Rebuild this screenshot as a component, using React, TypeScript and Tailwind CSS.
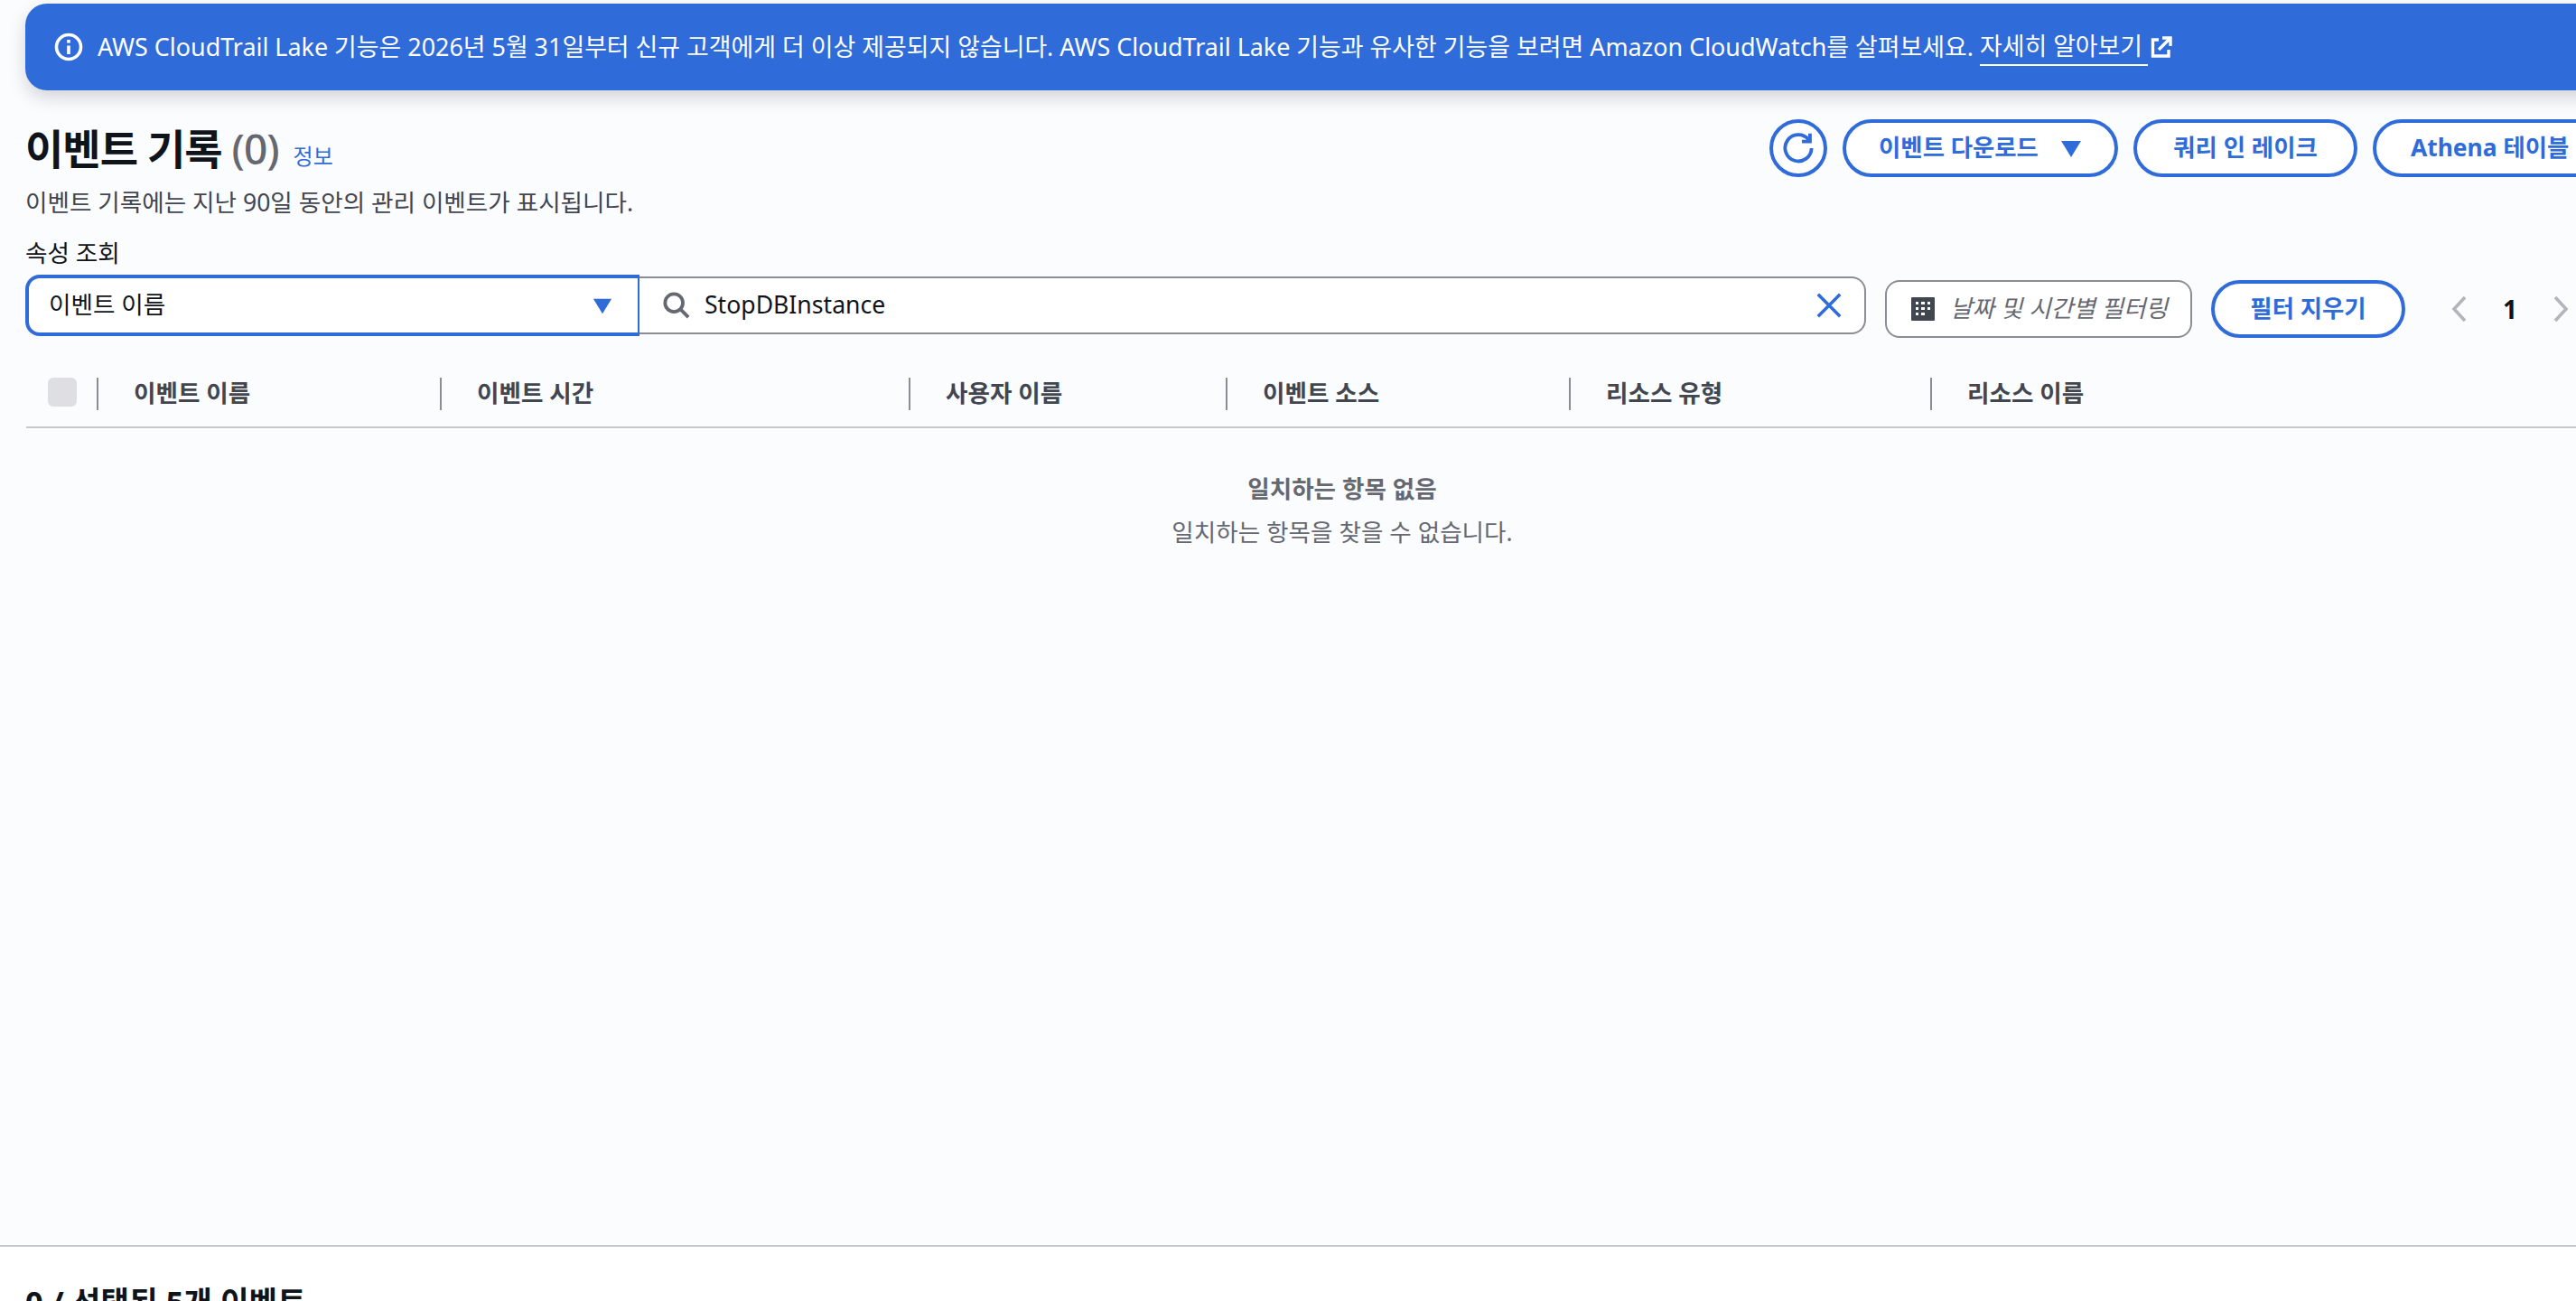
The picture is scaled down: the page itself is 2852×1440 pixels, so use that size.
import React from "react"

const font = { fontFamily: '"Noto Sans", "Noto Sans CJK KR", sans-serif' }

const columns = [
    { label: "이벤트 이름", width: "w-[380px]" },
    { label: "이벤트 시간", width: "w-[519px]" },
    { label: "사용자 이름", width: "w-[351px]" },
    { label: "이벤트 소스", width: "w-[380px]" },
    { label: "리소스 유형", width: "w-[400px]" },
    { label: "리소스 이름", width: "w-[400px]" },
]

const Caret = ({ className }: { className: string }) => (
    <svg viewBox="0 0 24 24" className={className} fill="currentColor">
        <path d="M1 4h22L12 22z" />
    </svg>
)

const PillButton = ({ children, width }: { children: React.ReactNode; width: string }) => (
    <button className={`${width} h-[64px] shrink-0 rounded-full border-[4px] border-[#2f6bd9] bg-white text-[#2f6bd9] text-[26.4px] font-bold flex items-center gap-[24px] whitespace-nowrap`}>
        {children}
    </button>
)

export default function App() {
    return (
        <div style={font} className="w-[2852px] h-[1440px] overflow-hidden bg-white flex flex-col">
            <div className="w-[2990px] h-[1378px] shrink-0 bg-[#fbfcfe] pl-[28px] pt-[4px]">
                {/* banner */}
                <div className="h-[96px] rounded-l-[24px] bg-[#2f6bd9] text-white text-[26.9px] flex items-center pl-[32px] shadow-[0_8px_20px_rgba(0,0,20,0.16)] whitespace-nowrap">
                    <svg viewBox="0 0 32 32" className="w-[32px] h-[32px] shrink-0 mr-[16px]" fill="none" stroke="currentColor" strokeWidth="3.6">
                        <circle cx="16" cy="16" r="13.5" />
                        <path d="M16 14.5v9.5" />
                        <path d="M16 8v3.6" />
                    </svg>
                    <span>AWS CloudTrail Lake 기능은 2026년 5월 31일부터 신규 고객에게 더 이상 제공되지 않습니다. AWS CloudTrail Lake 기능과 유사한 기능을 보려면 Amazon CloudWatch를 살펴보세요.</span>
                    <span className="ml-[7px] pr-[6px] border-b-2 border-white">자세히 알아보기</span>
                    <svg viewBox="0 0 24 24" className="w-[24px] h-[24px] ml-[3px] shrink-0" fill="none" stroke="currentColor" strokeWidth="3.4">
                        <path d="M9 4H2.5v18H20v-7" />
                        <path d="M9 15L22 2" />
                        <path d="M13 2h9v9" />
                    </svg>
                </div>

                {/* title row */}
                <div className="flex mt-[32px]">
                    <div className="w-[1931px] shrink-0">
                        <div className="flex items-baseline h-[60px]">
                            <h1 className="text-[46px] leading-[64px] font-bold text-[#0f141a] tracking-[-1px]">
                                이벤트 기록 <span className="font-medium text-[#656871]">(0)</span>
                            </h1>
                            <span className="ml-[16px] text-[24px] text-[#2f6bd9]">정보</span>
                        </div>
                        <p className="mt-[12px] text-[26.6px] leading-[40px] text-[#424650]">
                            이벤트 기록에는 지난 90일 동안의 관리 이벤트가 표시됩니다.
                        </p>
                    </div>
                    <div className="flex gap-[17px]">
                        <button className="w-[64px] h-[64px] shrink-0 rounded-full border-[4px] border-[#2f6bd9] bg-white text-[#2f6bd9] flex items-center justify-center">
                            <svg viewBox="0 0 32 32" className="w-[36px] h-[36px]" fill="none" stroke="currentColor" strokeWidth="3.4">
                                <path d="M26 7.5A13 13 0 1 0 29 16" />
                                <path d="M27.5 1.5v8h-8" />
                            </svg>
                        </button>
                        <PillButton width="w-[305px] justify-center">
                            이벤트 다운로드
                            <Caret className="w-[24px] h-[24px]" />
                        </PillButton>
                        <PillButton width="w-[248px] justify-center">쿼리 인 레이크</PillButton>
                        <PillButton width="w-[356px] justify-start pl-[38px]">Athena 테이블 생성</PillButton>
                    </div>
                </div>

                {/* filters */}
                <div className="mt-[16px] text-[26.6px] leading-[40px] text-[#0f141a]">속성 조회</div>
                <div className="flex items-start mt-[4px]">
                    <div className="w-[680px] h-[68px] shrink-0 rounded-l-[16px] border-[4px] border-r-2 border-[#2f6bd9] bg-white text-[#0f141a] text-[26.6px] flex items-center justify-between pl-[22px] pr-[28px]">
                        이벤트 이름
                        <Caret className="w-[22px] h-[22px] text-[#2f6bd9]" />
                    </div>
                    <div className="w-[1358px] h-[64px] mt-[2px] shrink-0 rounded-r-[16px] border-2 border-l-0 border-[#8c8c94] bg-white flex items-center pl-[26px] pr-[24px] text-[26.6px] text-[#0f141a]">
                        <svg viewBox="0 0 32 32" className="w-[30px] h-[30px] text-[#656871] mr-[16px]" fill="none" stroke="currentColor" strokeWidth="4">
                            <circle cx="13" cy="13" r="10.5" />
                            <path d="M21 21l9 9" />
                        </svg>
                        StopDBInstance
                        <svg viewBox="0 0 32 32" className="w-[30px] h-[30px] ml-auto text-[#2f6bd9]" fill="none" stroke="currentColor" strokeWidth="3.8">
                            <path d="M3 3l26 26M29 3L3 29" />
                        </svg>
                    </div>
                    <div className="w-[340px] h-[64px] mt-[6px] ml-[21px] shrink-0 rounded-[16px] border-2 border-[#8c8c94] bg-white flex items-center pl-[26px] text-[26.6px] italic text-[#656871] whitespace-nowrap">
                        <svg viewBox="0 0 28 28" className="w-[28px] h-[28px] mr-[16px] shrink-0 text-[#424650]">
                            <rect x="1" y="1" width="26" height="26" rx="1" fill="currentColor" />
                            <path d="M6 6h3v3H6zM12 6h4v3h-4zM19 6h3v3h-3zM6 12h3v3H6zM12 12h4v3h-4zM19 12h3v3h-3zM6 18h3v3H6zM12 18h4v3h-4z" fill="#fff" />
                        </svg>
                        날짜 및 시간별 필터링
                    </div>
                    <div className="mt-[6px] ml-[21px]">
                        <PillButton width="w-[215px] justify-center">필터 지우기</PillButton>
                    </div>
                    <div className="flex items-center h-[64px] mt-[6px] ml-[49px] text-[#b4b4bb]">
                        <svg viewBox="0 0 20 32" className="w-[22px] h-[32px]" fill="none" stroke="currentColor" strokeWidth="3.6">
                            <path d="M16 3L4 16l12 13" />
                        </svg>
                        <span className="w-[90px] text-center text-[28px] font-bold text-[#0f141a]">1</span>
                        <svg viewBox="0 0 20 32" className="w-[22px] h-[32px]" fill="none" stroke="currentColor" strokeWidth="3.6">
                            <path d="M4 3l12 13L4 29" />
                        </svg>
                    </div>
                </div>

                {/* table header */}
                <div className="w-[2914px] ml-[1px] mt-[44px]">
                    <div className="flex items-center h-[54px] border-b-2 border-[#c6c6cd] box-content">
                        <div className="w-[78px] h-[54px] shrink-0 pl-[24px] flex items-start">
                            <div className="w-[32px] h-[32px] rounded-[6px] bg-[#dedee3]" />
                        </div>
                        {columns.map((col) => (
                            <div key={col.label} className={`${col.width} h-[36px] mb-[18px] shrink-0 border-l-2 border-[#8c8c94] pl-[39px] flex items-center text-[26.6px] font-bold text-[#424650]`}>
                                {col.label}
                            </div>
                        ))}
                    </div>
                    <div className="flex flex-col items-center pt-[43px] text-[26.6px] leading-[48px] text-[#656871]">
                        <div className="font-bold">일치하는 항목 없음</div>
                        <div>일치하는 항목을 찾을 수 없습니다.</div>
                    </div>
                </div>
            </div>

            {/* lower panel */}
            <div className="flex-1 border-t-2 border-[#c6c6cd] bg-white pl-[28px] pt-[36px]">
                <h2 className="text-[34.4px] leading-[50px] font-bold text-[#0f141a]">0 / 선택된 5개 이벤트</h2>
            </div>
        </div>
    )
}
